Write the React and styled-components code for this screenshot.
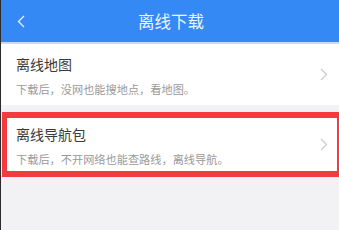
import React from 'react'
import styled, { createGlobalStyle, css } from 'styled-components'

const GlobalStyle = createGlobalStyle`
  html, body {
    margin: 0;
    padding: 0;
    background: #f2f1f3;
  }
  body {
    font-family: "Noto Sans CJK SC", "Noto Sans", sans-serif;
  }
`

const items = [
  {
    title: '离线地图',
    desc: '下载后，没网也能搜地点，看地图。',
  },
  {
    title: '离线导航包',
    desc: '下载后，不开网络也能查路线，离线导航。',
    highlighted: true,
  },
]

const Chevron = ({ color = '#ccc', flip, ...props }) => (
  <svg width="8" height="13" viewBox="0 0 8 13" {...props}>
    <path
      d={flip ? 'M7 1 L1.5 6.5 L7 12' : 'M1 1 L6.5 6.5 L1 12'}
      fill="none"
      stroke={color}
      strokeWidth="1.3"
      strokeLinejoin="miter"
    />
  </svg>
)

const App = () => (
  <Page>
    <GlobalStyle />
    <Header>
      <BackButton>
        <Chevron color="#e8f1fe" flip />
      </BackButton>
      <HeaderTitle>离线下载</HeaderTitle>
    </Header>
    <List>
      {items.map((item) => (
        <Row key={item.title} $highlighted={item.highlighted}>
          <RowTexts>
            <RowTitle>{item.title}</RowTitle>
            <RowDesc>{item.desc}</RowDesc>
          </RowTexts>
          <Chevron />
        </Row>
      ))}
    </List>
  </Page>
)

export default App

const Page = styled.div`
  width: 339px;
  height: 230px;
  box-sizing: border-box;
  border-left: 1px solid #2b2b2b;
  background: #f2f1f3;
  overflow: hidden;
`

const Header = styled.div`
  position: relative;
  height: 42px;
  display: flex;
  align-items: center;
  justify-content: center;
  background: #3589f4;
  border-bottom: 2px solid #c4dcfb;
`

const BackButton = styled.div`
  position: absolute;
  left: 16px;
  top: 15px;
  display: flex;
`

const HeaderTitle = styled.div`
  font-size: 16.5px;
  color: #eef4ff;
  margin-left: 2px;
`

const List = styled.div`
  display: flex;
  flex-direction: column;
  gap: 7px;
`

const Row = styled.div`
  display: flex;
  align-items: center;
  background: #fff;
  height: 61px;
  box-sizing: border-box;
  padding: 0 11px 0 15px;

  ${(p) =>
    p.$highlighted &&
    css`
      height: 65px;
      margin-left: 1px;
      padding: 0 9px 0 9px;
      border-style: solid;
      border-color: #f23a40;
      border-width: 6px 2px 6px 5px;
    `};
`

const RowTexts = styled.div`
  flex: 1 1 auto;
  display: flex;
  flex-direction: column;
  gap: 9px;
  padding-top: 2px;
`

const RowTitle = styled.div`
  font-size: 14px;
  line-height: 18px;
  color: #3a3a3a;
`

const RowDesc = styled.div`
  font-size: 11.2px;
  line-height: 15px;
  color: #9a9a9a;
`
